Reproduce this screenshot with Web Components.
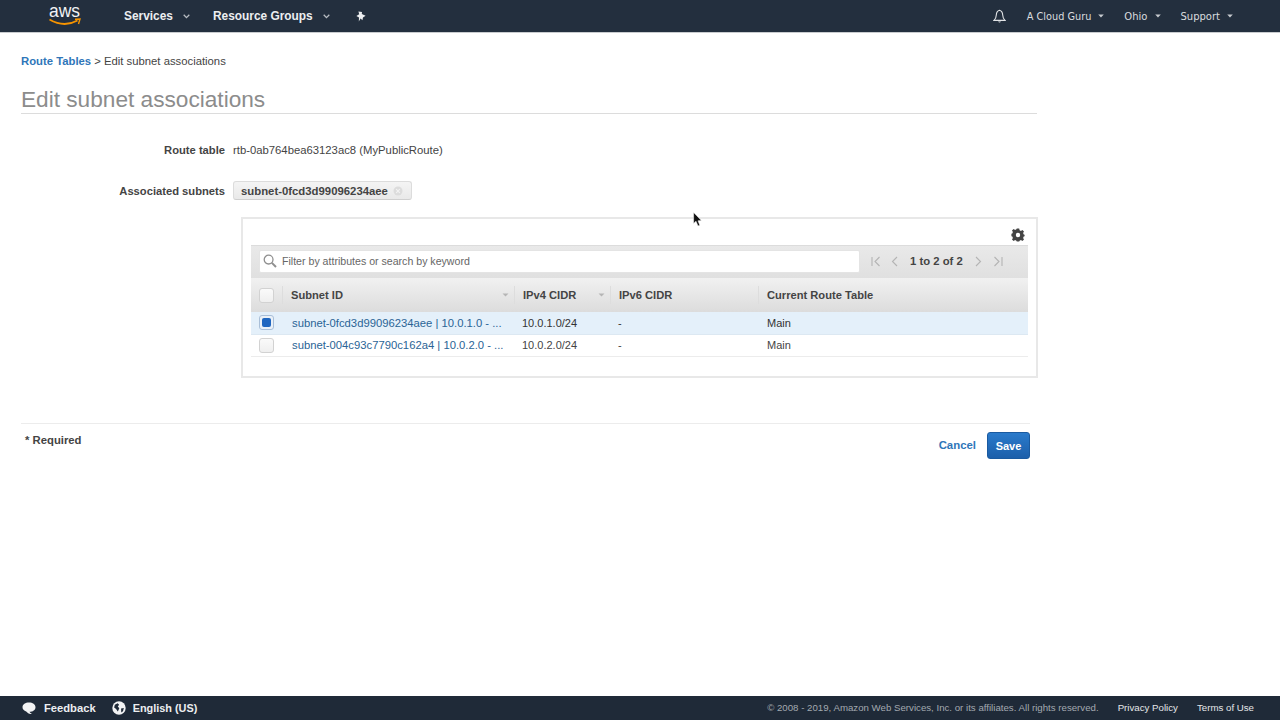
<!DOCTYPE html>
<html>
<head>
<meta charset="utf-8">
<title>Edit subnet associations</title>
<style>
  html, body { margin: 0; height: 100%; }
  body {
    font-family: "Liberation Sans", Arial, sans-serif;
    font-size: 12px;
    color: #444;
    background: #fff;
    display: flex;
    flex-direction: column;
    height: 720px;
    overflow: hidden;
    position: relative;
  }
  edit-page { flex: 1; }
</style>
</head>
<body>
<aws-topbar></aws-topbar>
<edit-page></edit-page>
<aws-footer></aws-footer>
<mouse-pointer></mouse-pointer>

<script>
const caret = `<svg width="6" height="4" viewBox="0 0 6 4"><path d="M0.2 0.5 L3 3.5 L5.8 0.5 Z" fill="#c8ccd0"/></svg>`;
const chevron = `<svg width="7" height="5" viewBox="0 0 7 5"><path d="M0.7 0.8 L3.5 3.6 L6.3 0.8" fill="none" stroke="#b8bdc3" stroke-width="1.3"/></svg>`;

class AwsTopbar extends HTMLElement {
  constructor() {
    super();
    this.attachShadow({ mode: 'open' }).innerHTML = `
      <style>
        :host { display: flex; align-items: center; height: 32px; flex: none; background: #232f3e; border-bottom: 1px solid #c9cccf; color: #eceef0; padding: 0 47px 0 48px; }
        .logo { width: 33px; height: 32px; margin-right: 43px; }
        .main { font-weight: bold; font-size: 11.9px; display: flex; align-items: center; gap: 10px; }
        .pin { margin-left: 26px; }
        .right { margin-left: auto; display: flex; align-items: center; font: 10px "DejaVu Sans", sans-serif; color: #d9dcdf; }
        .right span { display: flex; align-items: center; gap: 7px; }
      </style>
      <svg class="logo" viewBox="0 0 33 32">
        <text x="16.5" y="17" text-anchor="middle" font-family="Liberation Sans, sans-serif" font-size="18" fill="#f2f3f4" textLength="31" lengthAdjust="spacingAndGlyphs">aws</text>
        <path d="M1.5 19.5 Q16 28 29.5 20.5" fill="none" stroke="#f79400" stroke-width="1.8"/>
        <path d="M27 19.2 L32 19 L30.5 24" fill="none" stroke="#f79400" stroke-width="1.4"/>
      </svg>
      <span class="main" style="margin-right:23px">Services ${chevron}</span>
      <span class="main">Resource Groups ${chevron}</span>
      <svg class="pin" width="10" height="11" viewBox="0 0 10 11"><path d="M2.4 0.4 L6 1 L5.8 3 L9.6 4.8 L7 6.4 L6.4 9.2 L4.6 7.4 L2.8 10.6 L3 6.4 L0.4 5 L3.2 3.2 Z" fill="#eceef0"/></svg>
      <div class="right">
        <svg width="13" height="15" viewBox="0 0 13 15" style="margin-right:21px"><path d="M6.5 1.2 C4 1.8 3.4 3.6 3.3 6 C3.2 8.6 2.6 10 1 11.4 L12 11.4 C10.4 10 9.8 8.6 9.7 6 C9.6 3.6 9 1.8 6.5 1.2 Z" fill="none" stroke="#e2e4e6" stroke-width="1.1"/><path d="M5 12.4 Q6.5 14.6 8 12.4" fill="#e2e4e6"/></svg>
        <span style="margin-right:20px;font-size:9.75px">A Cloud Guru ${caret}</span>
        <span style="margin-right:19px;gap:8px">Ohio ${caret}</span>
        <span>Support ${caret}</span>
      </div>`;
  }
}

class AwsFooter extends HTMLElement {
  constructor() {
    super();
    this.attachShadow({ mode: 'open' }).innerHTML = `
      <style>
        :host { display: flex; align-items: center; height: 24px; flex: none; background: #1f2a38; color: #eceef0; padding: 0 26px 0 22px; font-size: 11.2px; }
        b { font-weight: bold; }
        .copy { margin-left: auto; color: #a3a9b0; font-size: 9.68px; margin-bottom: 2px; }
        a { color: #e4e6e8; font-size: 9.7px; margin-left: 19px; margin-bottom: 2px; }
      </style>
      <svg width="14" height="14" viewBox="0 0 14 14" style="margin-right:8px"><path d="M7 1.5 C10.6 1.5 13.5 3.4 13.5 6.2 C13.5 9 10.6 10.8 7.6 10.8 C8 11.8 9 12.6 10 13 C7.6 13 5.4 12 4.2 10.4 C2 9.8 0.5 8.2 0.5 6.2 C0.5 3.4 3.4 1.5 7 1.5 Z" fill="#f2f3f4"/></svg>
      <b style="margin-right:16px">Feedback</b>
      <svg width="14" height="14" viewBox="0 0 13 13" style="margin-right:7px"><circle cx="6.5" cy="6.5" r="6.2" fill="#f2f3f4"/><path d="M2.6 3.4 L5.2 2 L6.6 3.4 L5.4 5 L6.8 6.8 L5.4 9.8 L3.8 7.4 L2 6 Z M8.4 7 L11 6.4 L10.2 9.6 L8.6 10.6 Z" fill="#1f2a38"/></svg>
      <b style="font-size:10.9px">English (US)</b>
      <span class="copy">© 2008 - 2019, Amazon Web Services, Inc. or its affiliates. All rights reserved.</span>
      <a>Privacy Policy</a>
      <a>Terms of Use</a>`;
  }
}

class FormRow extends HTMLElement {
  constructor() {
    super();
    this.attachShadow({ mode: 'open' }).innerHTML = `
      <style>
        :host { display: flex; align-items: center; color: #444; }
        .label { width: 225px; text-align: right; font-weight: bold; font-size: 11.2px; margin-right: 8px; flex: none; }
      </style>
      <span class="label">${this.getAttribute('label')}</span><slot></slot>`;
  }
}

class SubnetChip extends HTMLElement {
  constructor() {
    super();
    this.attachShadow({ mode: 'open' }).innerHTML = `
      <style>
        :host { display: inline-flex; align-items: center; height: 17px; padding: 0 8px 0 7px; background: linear-gradient(#f4f4f4, #e9e9e9); border: 1px solid #dcdcdc; border-bottom-color: #cfcfcf; border-radius: 3px; font-weight: bold; font-size: 11.35px; color: #444; }
        svg { margin-left: 5px; }
      </style>
      <slot></slot>
      <svg width="10" height="10" viewBox="0 0 10 10"><circle cx="5" cy="5" r="4.5" fill="#dcdcdc"/><path d="M3.2 3.2 L6.8 6.8 M6.8 3.2 L3.2 6.8" stroke="#f2f2f2" stroke-width="1.2"/></svg>`;
  }
}

class CheckBox extends HTMLElement {
  constructor() {
    super();
    const on = this.hasAttribute('checked');
    this.attachShadow({ mode: 'open' }).innerHTML = `
      <style>
        :host { display: flex; align-items: center; justify-content: center; box-sizing: border-box; width: 15px; height: 15px; border: 1px solid ${on ? '#a9bfd8' : '#d2d2d2'}; border-radius: 3px; background: ${on ? '#eaf1f8' : 'linear-gradient(#fafafa,#efefef)'}; flex: none; }
        i { display: block; width: 9px; height: 9px; border-radius: 2px; background: #1f66c0; }
      </style>
      ${on ? '<i></i>' : ''}`;
  }
}

class SubnetTable extends HTMLElement {
  constructor() {
    super();
    const sort = `<svg class="sort" width="7" height="4" viewBox="0 0 7 4"><path d="M0.5 0.5 L3.5 3.5 L6.5 0.5 Z" fill="#b5b5b5"/></svg>`;
    const row = (sel, checked, id, cidr) => `
      <div class="row ${sel ? 'sel' : ''}">
        <div class="cb"><check-box ${checked ? 'checked' : ''}></check-box></div>
        <a class="c1">${id}</a>
        <div class="c2">${cidr}</div>
        <div class="c3">-</div>
        <div class="c4">Main</div>
      </div>`;
    this.attachShadow({ mode: 'open' }).innerHTML = `
      <style>
        :host { display: block; box-sizing: border-box; width: 797px; height: 161px; margin-left: 241px; margin-top: 17px; border: 2px solid #e8e8e8; padding: 0 8px; font-size: 11px; color: #444; }
        .gear { display: flex; justify-content: flex-end; height: 26px; padding: 9px 3px 0 0; box-sizing: border-box; }
        .tools { height: 33px; display: flex; align-items: center; background: linear-gradient(#e9e9e9, #e0e0e0); border-top: 1px solid #dcdcdc; padding: 0 8px 2px; box-sizing: border-box; }
        .search { box-sizing: border-box; width: 601px; height: 23px; background: #fff; border: 1px solid #e4e4e4; border-radius: 2px; display: flex; align-items: center; padding-left: 3px; color: #666; font-size: 10.6px; margin-right: 11px; flex: none; }
        .search svg { margin-right: 5px; }
        .pager { display: flex; align-items: center; gap: 0; color: #444; font-weight: bold; font-size: 11.3px; white-space: nowrap; }
        .head, .row { display: grid; grid-template-columns: 31px 232px 96px 148px 1fr; align-items: center; }
        .head { height: 34px; background: linear-gradient(#f1f1f1, #dcdcdc); font-weight: bold; font-size: 11.15px; color: #444; }
        .head > div { display: flex; align-items: center; height: 18px; padding-left: 8px; box-sizing: border-box; border-left: 1px solid #dddddd; }
        .head > .cb, .row > .cb { border: 0; padding: 0; justify-content: center; display: flex; }
        .head .sort { margin-left: auto; margin-right: 5px; }
        .row { height: 22.5px; box-sizing: border-box; border-bottom: 1px solid #ececec; font-size: 11px; }
        .row.sel { background: #e4f0fa; border-bottom-color: #dce8f2; color: #333; }
        .row .c1 { color: #2a6496; padding-left: 10px; font-size: 11.27px; white-space: nowrap; }
        .row .c2 { padding-left: 8px; }
        .row .c3 { padding-left: 8px; }
        .row .c4 { padding-left: 9px; }
      </style>
      <div class="gear">
        <svg width="14" height="14" viewBox="0 0 14 14"><path fill="#444" fill-rule="evenodd" d="M5.8 0.6 H8.2 L8.6 2.3 L9.9 2.9 L11.4 2 L13 3.6 L12.1 5.1 L12.7 6.4 L13.6 6.8 V8.2 L12.7 8.6 L12.1 9.9 L13 11.4 L11.4 13 L9.9 12.1 L8.6 12.7 L8.2 13.4 H5.8 L5.4 12.7 L4.1 12.1 L2.6 13 L1 11.4 L1.9 9.9 L1.3 8.6 L0.4 8.2 V5.8 L1.3 5.4 L1.9 4.1 L1 2.6 L2.6 1 L4.1 1.9 L5.4 1.3 Z M7 4.8 A2.2 2.2 0 1 0 7 9.2 A2.2 2.2 0 1 0 7 4.8 Z"/></svg>
      </div>
      <div class="tools">
        <div class="search">
          <svg width="14" height="14" viewBox="0 0 14 14"><circle cx="5.6" cy="5.6" r="4.4" fill="none" stroke="#8f8f8f" stroke-width="1.3"/><path d="M8.9 8.9 L13 13" stroke="#8f8f8f" stroke-width="2"/></svg>
          Filter by attributes or search by keyword
        </div>
        <div class="pager">
          <svg width="10" height="11" viewBox="0 0 10 11" style="margin-right:10px"><path d="M1 1 V10 M8.5 1 L4 5.5 L8.5 10" fill="none" stroke="#b4b4b4" stroke-width="1.1"/></svg>
          <svg width="7" height="11" viewBox="0 0 7 11" style="margin-right:12px"><path d="M6 1 L1.5 5.5 L6 10" fill="none" stroke="#b4b4b4" stroke-width="1.1"/></svg>
          1 to 2 of 2
          <svg width="7" height="11" viewBox="0 0 7 11" style="margin-left:12px;margin-right:11px"><path d="M1 1 L5.5 5.5 L1 10" fill="none" stroke="#b4b4b4" stroke-width="1.1"/></svg>
          <svg width="10" height="11" viewBox="0 0 10 11"><path d="M9 1 V10 M1.5 1 L6 5.5 L1.5 10" fill="none" stroke="#b4b4b4" stroke-width="1.1"/></svg>
        </div>
      </div>
      <div class="head">
        <div class="cb"><check-box></check-box></div>
        <div>Subnet ID${sort}</div>
        <div>IPv4 CIDR${sort}</div>
        <div>IPv6 CIDR</div>
        <div>Current Route Table</div>
      </div>
      ${row(true, true, 'subnet-0fcd3d99096234aee | 10.0.1.0 - ...', '10.0.1.0/24')}
      ${row(false, false, 'subnet-004c93c7790c162a4 | 10.0.2.0 - ...', '10.0.2.0/24')}`;
  }
}

class EditPage extends HTMLElement {
  constructor() {
    super();
    this.attachShadow({ mode: 'open' }).innerHTML = `
      <style>
        :host { display: block; color: #444; font-size: 12px; }
        .wrap { width: 1037px; box-sizing: border-box; }
        .crumb { padding: 21px 0 0 21px; height: 36px; box-sizing: border-box; line-height: 14px; font-size: 11.3px; }
        .crumb a { color: #2f76b9; font-weight: bold; }
        h1 { margin: 0 0 0 21px; padding: 16px 0 0 0; height: 45px; box-sizing: border-box; font-weight: normal; font-size: 22.65px; line-height: 28px; color: #8c8c8c; border-bottom: 1px solid #dcdcdc; }
        .rows { padding-top: 28px; }
        .actions { margin-top: 45px; border-top: 1px solid #ececec; margin-left: 21px; width: 1009px; display: flex; align-items: flex-start; }
        .req { margin-left: 4px; margin-top: 10px; font-weight: bold; font-size: 11.3px; }
        .cancel { margin-left: auto; color: #2f76b9; font-weight: bold; font-size: 11.4px; margin-top: 15px; margin-right: 11px; }
        .save { width: 43px; height: 27px; margin-top: 8px; background: linear-gradient(#2a7acb, #1c5faa); border: 1px solid #1a5aa0; box-sizing: border-box; border-radius: 3px; color: #fff; font: bold 11px "Liberation Sans", sans-serif; padding: 0; }
      </style>
      <div class="wrap">
        <div class="crumb"><a>Route Tables</a> &gt; Edit subnet associations</div>
        <h1>Edit subnet associations</h1>
        <div class="rows">
          <form-row label="Route table" style="height:16px"><span style="font-size:11.3px">rtb-0ab764bea63123ac8 (MyPublicRoute)</span></form-row>
          <form-row label="Associated subnets" style="margin-top:23px"><subnet-chip>subnet-0fcd3d99096234aee</subnet-chip></form-row>
          <subnet-table></subnet-table>
        </div>
        <div class="actions">
          <span class="req">* Required</span>
          <span class="cancel">Cancel</span>
          <button class="save">Save</button>
        </div>
      </div>`;
  }
}

// the captured mouse cursor lies over the content
class MousePointer extends HTMLElement {
  constructor() {
    super();
    this.attachShadow({ mode: 'open' }).innerHTML = `
      <style>:host { position: absolute; left: 693px; top: 212px; width: 9px; height: 15px; }</style>
      <svg width="9" height="15" viewBox="0 0 9 15"><path d="M0.6 0.4 L0.6 11.4 L3 9.2 L5 14 L6.8 13.2 L5 8.8 L8.4 8.6 Z" fill="#111" stroke="#fff" stroke-width="0.5"/></svg>`;
  }
}

customElements.define('aws-topbar', AwsTopbar);
customElements.define('aws-footer', AwsFooter);
customElements.define('form-row', FormRow);
customElements.define('subnet-chip', SubnetChip);
customElements.define('check-box', CheckBox);
customElements.define('subnet-table', SubnetTable);
customElements.define('edit-page', EditPage);
customElements.define('mouse-pointer', MousePointer);
</script>
</body>
</html>
